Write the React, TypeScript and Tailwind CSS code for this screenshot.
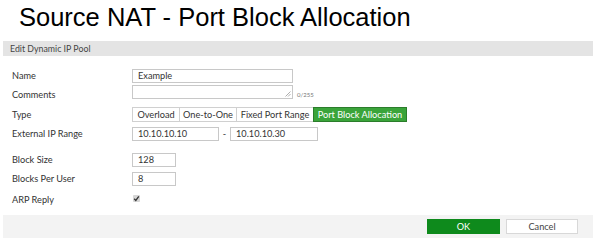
const lato = { fontFamily: 'Lato, "Open Sans", sans-serif' };

const TYPES = [
  { label: 'Overload', width: 'w-[47px]' },
  { label: 'One-to-One', width: 'w-[57px]' },
  { label: 'Fixed Port Range', width: 'w-[77px]' },
  { label: 'Port Block Allocation', width: 'w-[94px]', active: true },
];

function Row({
  label,
  className,
  labelClassName,
  children,
}: {
  label: string;
  className?: string;
  labelClassName?: string;
  children: React.ReactNode;
}) {
  return (
    <div className={`flex items-center ${className ?? ''}`}>
      <div className={`w-[120px] shrink-0 text-[9.2px] text-[#333] ${labelClassName ?? ''}`}>
        {label}
      </div>
      {children}
    </div>
  );
}

function TextBox({ value, width }: { value: string; width: string }) {
  return (
    <div
      className={`${width} flex h-[14px] items-center border border-[#c8c8c8] bg-white pl-[5px] text-[9.2px] text-[#333]`}
    >
      {value}
    </div>
  );
}

export default function App() {
  return (
    <div className="h-[249px] w-[600px] overflow-hidden bg-white">
      <div
        className="h-[32px] pl-[19px] pt-[2px] text-[25.5px] leading-[30px] text-black"
        style={{ fontFamily: '"Liberation Sans", Arial, sans-serif' }}
      >
        Source NAT - Port Block Allocation
      </div>

      <div style={lato}>
        <div className="mx-[3px] mt-[9px] flex h-[15px] w-[590px] items-center bg-[#e4e4e4] pl-[7px] text-[8.8px] text-[#444]">
          Edit Dynamic IP Pool
        </div>

        <div className="pl-[12px]">
          <Row label="Name" className="mt-[13px] h-[14px]">
            <TextBox value="Example" width="w-[161px]" />
          </Row>

          <Row label="Comments" className="mt-[2px] h-[14px]" labelClassName="mt-[6px]">
            <div className="relative h-[14px] w-[161px] border border-[#c8c8c8] bg-white">
              <svg
                className="absolute bottom-[1px] right-[1px]"
                width="6"
                height="6"
                viewBox="0 0 6 6"
              >
                <path d="M5.5 0.5 L0.5 5.5 M5.5 3 L3 5.5" stroke="#999" strokeWidth="0.8" />
              </svg>
            </div>
            <span className="ml-[4px] mt-[4px] text-[6px] text-[#777]">0/255</span>
          </Row>

          <Row label="Type" className="mt-[8px] h-[15px]">
            <div className="flex h-[15px]">
              {TYPES.map((t) =>
                t.active ? (
                  <div
                    key={t.label}
                    className={`${t.width} flex items-center justify-center border border-[#2b7d2b] bg-[#3aa43a] text-[9.2px] text-white`}
                  >
                    {t.label}
                  </div>
                ) : (
                  <div
                    key={t.label}
                    className={`${t.width} flex items-center justify-center border border-r-0 border-[#d0d0d0] bg-white text-[9.2px] text-[#333]`}
                  >
                    {t.label}
                  </div>
                ),
              )}
            </div>
          </Row>

          <Row label="External IP Range" className="mt-[5px] h-[14px]">
            <TextBox value="10.10.10.10" width="w-[87px]" />
            <span className="w-[11px] text-center text-[9.2px] text-[#333]">-</span>
            <TextBox value="10.10.10.30" width="w-[88px]" />
          </Row>

          <Row label="Block Size" className="mt-[12px] h-[14px]">
            <TextBox value="128" width="w-[44px]" />
          </Row>

          <Row label="Blocks Per User" className="mt-[5px] h-[14px]">
            <TextBox value="8" width="w-[44px]" />
          </Row>

          <Row label="ARP Reply" className="mt-[7px] h-[14px]">
            <div className="mb-[4px] ml-[1px] flex h-[7px] w-[7px] items-center justify-center rounded-[1px] bg-[#d6d6d6]">
              <svg width="7" height="7" viewBox="0 0 7 7">
                <path d="M1.2 3.8 L2.8 5.4 L5.8 1.4" stroke="#333" strokeWidth="1.3" fill="none" />
              </svg>
            </div>
          </Row>
        </div>

        <div className="mx-[3px] mt-[8px] flex h-[23px] w-[590px] items-center justify-end gap-[6px] bg-[#f3f3f3] pr-[15px]">
          <div className="flex h-[15px] w-[73px] items-center justify-center bg-[#0e8a1c] text-[9.2px] text-white">
            OK
          </div>
          <div className="flex h-[15px] w-[72px] items-center justify-center border border-[#d8d8d8] bg-white text-[9.2px] text-[#444]">
            Cancel
          </div>
        </div>
      </div>
    </div>
  );
}
